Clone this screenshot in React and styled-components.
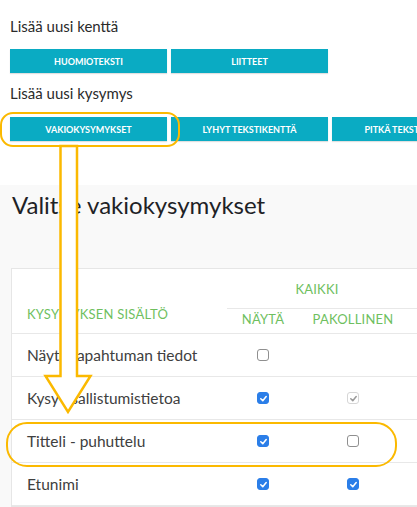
import React from 'react';
import styled, { createGlobalStyle } from 'styled-components';

const GlobalStyle = createGlobalStyle`
  html, body {
    margin: 0;
    padding: 0;
    background: #fff;
    overflow: hidden;
  }
  body {
    font-family: Lato, "Open Sans", sans-serif;
  }
`;

const questions = [
  { label: 'Näytä tapahtuman tiedot', show: false, required: null },
  { label: 'Kysy osallistumistietoa', show: true, required: 'disabled' },
  { label: 'Titteli - puhuttelu', show: true, required: false },
  { label: 'Etunimi', show: true, required: true },
];

const Checkbox = ({ checked, disabled }) => (
  <Box $checked={checked} $disabled={disabled}>
    {checked && (
      <svg width="9" height="9" viewBox="0 0 10 10">
        <path d="M2 5.3 L4.2 7.4 L8 2.8" fill="none" stroke={disabled ? '#9a9a9a' : '#fff'} strokeWidth="1.7" strokeLinecap="round" strokeLinejoin="round" />
      </svg>
    )}
  </Box>
);

const App = () => {
  return (
    <Page>
      <GlobalStyle />
      <Top>
        <Label>Lisää uusi kenttä</Label>
        <ButtonRow>
          <ActionButton>HUOMIOTEKSTI</ActionButton>
          <ActionButton>LIITTEET</ActionButton>
        </ButtonRow>
        <Label $second>Lisää uusi kysymys</Label>
        <ButtonRow>
          <ActionButton>VAKIOKYSYMYKSET</ActionButton>
          <ActionButton>LYHYT TEKSTIKENTTÄ</ActionButton>
          <ActionButton>PITKÄ TEKSTIKENTTÄ</ActionButton>
        </ButtonRow>
      </Top>
      <Panel>
        <Heading>Valitse vakiokysymykset</Heading>
        <Table>
          <ContentHead>KYSYMYKSEN SISÄLTÖ</ContentHead>
          <GroupHead>KAIKKI</GroupHead>
          <FillHead />
          <SubHead>NÄYTÄ</SubHead>
          <SubHead>PAKOLLINEN</SubHead>
          <SubHead />
          {questions.map((q) => (
            <React.Fragment key={q.label}>
              <QuestionCell>{q.label}</QuestionCell>
              <CheckCell>
                <Checkbox checked={q.show} />
              </CheckCell>
              <CheckCell>
                {q.required !== null && (
                  <Checkbox checked={q.required === true || q.required === 'disabled'} disabled={q.required === 'disabled'} />
                )}
              </CheckCell>
              <CheckCell />
            </React.Fragment>
          ))}
        </Table>
      </Panel>

      <Highlight $left={0} $top={112} $width={180} $height={35} $radius={13} />
      <Highlight $left={6} $top={422} $width={391} $height={45} $radius={21} />
      <ArrowLayer width="417" height="507" viewBox="0 0 417 507">
        <path
          d="M60.5 146 L77 146 L77 376 L90.5 376 L68 412 L45.5 376 L60.5 376 Z"
          fill="#fff"
          stroke="#fbb900"
          strokeWidth="2.5"
          strokeLinejoin="miter"
        />
      </ArrowLayer>
    </Page>
  );
};

const Page = styled.div`
  position: relative;
  width: 417px;
  height: 507px;
  overflow: hidden;
`;

const Top = styled.div`
  padding: 17px 0 0 10px;
`;

const Label = styled.div`
  font-size: 15px;
  line-height: 18px;
  color: #2b2b2b;
  margin-top: ${(p) => (p.$second ? '11px' : '0')};
  margin-bottom: ${(p) => (p.$second ? '15px' : '14px')};
`;

const ButtonRow = styled.div`
  display: flex;
  gap: 4px;
`;

const ActionButton = styled.button`
  flex: 0 0 157px;
  height: 24px;
  border: none;
  padding: 0;
  background: #0aabc3;
  color: #fff;
  font-family: Lato, "Open Sans", sans-serif;
  font-weight: 700;
  font-size: 9px;
  box-shadow: 0 1px 1px rgba(0, 0, 0, 0.12);
  white-space: nowrap;
  overflow: hidden;
`;

const Panel = styled.div`
  margin-top: 44px;
  background: #f9f9f9;
  padding: 5px 0 0 11px;
  height: 400px;
`;

const Heading = styled.h1`
  margin: 0 0 0 1px;
  font-size: 24px;
  line-height: 30px;
  font-weight: 400;
  color: #1e2226;
`;

const Table = styled.div`
  margin-top: 48px;
  width: 470px;
  background: #fff;
  border: 1px solid #e6e6e6;
  display: grid;
  grid-template-columns: 215px 72px 108px 1fr;
  grid-template-rows: 40px 25px repeat(4, 43px);
`;

const HeadText = styled.div`
  color: #6fbf5f;
  font-size: 13px;
  letter-spacing: 0.2px;
  display: flex;
  align-items: center;
  justify-content: center;
`;

const ContentHead = styled(HeadText)`
  grid-row: span 2;
  justify-content: flex-start;
  align-items: flex-end;
  padding: 0 0 11px 15px;
  border-bottom: 1px solid #e8e8e8;
`;

const GroupHead = styled(HeadText)`
  grid-column: span 2;
  border-bottom: 1px solid #e8e8e8;
`;

const FillHead = styled.div`
  border-bottom: 1px solid #e8e8e8;
`;

const SubHead = styled(HeadText)`
  border-bottom: 1px solid #e8e8e8;
  padding-bottom: 4px;
`;

const QuestionCell = styled.div`
  display: flex;
  align-items: center;
  padding-left: 15px;
  font-size: 15.5px;
  color: #404040;
  border-bottom: 1px solid #e8e8e8;
`;

const CheckCell = styled.div`
  display: flex;
  align-items: center;
  justify-content: center;
  border-bottom: 1px solid #e8e8e8;
`;

const Box = styled.span`
  box-sizing: border-box;
  width: 12px;
  height: 12px;
  border-radius: 3px;
  display: inline-flex;
  align-items: center;
  justify-content: center;
  background: ${(p) => (p.$checked && !p.$disabled ? '#2b7ee8' : '#fff')};
  border: 1px solid ${(p) => (p.$checked && !p.$disabled ? '#2b7ee8' : p.$disabled ? '#d6d6d6' : '#8f8f8f')};
`;

const Highlight = styled.div`
  position: absolute;
  box-sizing: border-box;
  left: ${(p) => p.$left}px;
  top: ${(p) => p.$top}px;
  width: ${(p) => p.$width}px;
  height: ${(p) => p.$height}px;
  border: 2.5px solid #fbb900;
  border-radius: ${(p) => p.$radius}px;
  pointer-events: none;
`;

const ArrowLayer = styled.svg`
  position: absolute;
  left: 0;
  top: 0;
  pointer-events: none;
`;

export default App;
